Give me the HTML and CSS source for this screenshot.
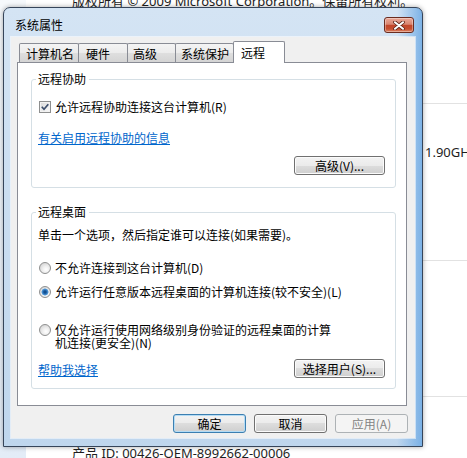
FILE: index.html
```html
<!DOCTYPE html>
<html lang="zh-CN">
<head>
    <meta charset="UTF-8">
    <meta name="viewport" content="width=device-width, initial-scale=1.0">
    <title>系统属性</title>
    <link rel="stylesheet" href="styles.css">
</head>
<body>
    <div class="page">
        <div class="sidebar"></div>
        <div class="content">
            <p class="copyright">版权所有 © 2009 Microsoft Corporation。保留所有权利。</p>
            <div class="section section-edition"></div>
            <div class="section section-system">
                <p class="spec-value">1.90GHz</p>
            </div>
            <div class="section section-name"></div>
            <p class="product-id">产品 ID: 00426-OEM-8992662-00006</p>
        </div>
    </div>

    <div class="dialog">
        <div class="titlebar">
            <span class="title">系统属性</span>
            <button class="close-button">
                <svg width="12" height="9" viewBox="0 0 12 9">
                    <path d="M2 1.2 L10 7.8 M10 1.2 L2 7.8" stroke="#5a2418" stroke-width="3.6" stroke-linecap="round"/>
                    <path d="M2 1.2 L10 7.8 M10 1.2 L2 7.8" stroke="#ffffff" stroke-width="2" stroke-linecap="round"/>
                </svg>
            </button>
        </div>

        <div class="client">
            <div class="tabs">
                <div class="tab tab-name">计算机名</div>
                <div class="tab tab-hardware">硬件</div>
                <div class="tab tab-advanced">高级</div>
                <div class="tab tab-protect">系统保护</div>
                <div class="tab tab-remote active">远程</div>
            </div>

            <div class="tab-panel">
                <div class="group group-assist">
                    <span class="group-title">远程协助</span>
                    <label class="check-row">
                        <span class="checkbox">
                            <svg width="10" height="10" viewBox="0 0 10 10">
                                <path d="M1.8 4.8 L4 7.2 L8.3 2.2" fill="none" stroke="#3b4d6b" stroke-width="1.7"/>
                            </svg>
                        </span>
                        允许远程协助连接这台计算机(R)
                    </label>
                    <a class="link link-info">有关启用远程协助的信息</a>
                    <div class="group-actions">
                        <button class="btn btn-wide">高级(V)...</button>
                    </div>
                </div>

                <div class="group group-desktop">
                    <span class="group-title">远程桌面</span>
                    <p class="hint">单击一个选项，然后指定谁可以连接(如果需要)。</p>
                    <label class="radio-row radio-first">
                        <span class="radio"></span>
                        <span>不允许连接到这台计算机(D)</span>
                    </label>
                    <label class="radio-row radio-second">
                        <span class="radio checked"></span>
                        <span>允许运行任意版本远程桌面的计算机连接(较不安全)(L)</span>
                    </label>
                    <label class="radio-row radio-third">
                        <span class="radio"></span>
                        <span class="radio-text-wrap">仅允许运行使用网络级别身份验证的远程桌面的计算机连接(更安全)(N)</span>
                    </label>
                    <div class="group-footer">
                        <a class="link">帮助我选择</a>
                        <button class="btn btn-wide">选择用户(S)...</button>
                    </div>
                </div>
            </div>

            <div class="dialog-buttons">
                <button class="btn btn-default">确定</button>
                <button class="btn">取消</button>
                <button class="btn" disabled>应用(A)</button>
            </div>
        </div>
    </div>
</body>
</html>
```

FILE: styles.css
```css
* {
    box-sizing: border-box;
}
html, body {
    margin: 0;
    height: 100%;
    overflow: hidden;
}
body {
    background-color: white;
    color: #1e1e1e;
    font-family: "Noto Sans", "Noto Sans CJK SC", sans-serif;
    position: relative;
}

/* control panel page behind the dialog */
.page {
    display: flex;
    height: 458px;
}
.sidebar {
    width: 26px;
    flex-shrink: 0;
    background: linear-gradient(#f6f9fc, #e3ecf7);
}
.content {
    flex: 1;
    min-width: 0;
    display: flex;
    flex-direction: column;
    padding-left: 46px;
}
.copyright {
    margin: -7px 0 0;
    font-size: 13px;
    line-height: 16px;
    white-space: nowrap;
}
.section {
    border-bottom: 1px solid #e2e2e2;
    flex-shrink: 0;
}
.section-edition {
    height: 95px;
}
.section-system {
    height: 157px;
    padding-top: 39px;
}
.section-name {
    height: 136px;
}
.spec-value {
    margin: 0;
    padding-left: 353px;
    font-size: 13px;
    line-height: 18px;
    white-space: nowrap;
}
.product-id {
    margin: 47px 0 0;
    font-size: 13px;
    line-height: 18px;
    white-space: nowrap;
}

/* dialog window */
.dialog {
    position: absolute;
    left: 3px;
    top: 7px;
    width: 420px;
    height: 440px;
    border: 1px solid #36455a;
    border-radius: 7px 7px 0 0;
    background:
        linear-gradient(to right, rgba(140, 190, 235, 0) 94%, rgba(110, 170, 228, 0.85) 100%),
        linear-gradient(#d4e4f4, #bfd6ed);
    box-shadow: 0 0 5px rgba(0, 0, 0, 0.35);
    display: flex;
    flex-direction: column;
    font-family: "Noto Sans CJK SC", sans-serif;
    font-size: 12px;
    color: black;
}
.titlebar {
    height: 29px;
    flex-shrink: 0;
    display: flex;
    justify-content: space-between;
    align-items: flex-start;
    padding: 9px 8px 0 11px;
}
.title {
    line-height: 16px;
}
.close-button {
    width: 30px;
    height: 16px;
    padding: 0;
    border: 1px solid #6a2c20;
    border-radius: 3px;
    background: linear-gradient(#eaa898 0%, #d98570 45%, #c2462b 52%, #c54e2f 78%, #df8a6b 100%);
    box-shadow: inset 0 0 0 1px rgba(255, 255, 255, 0.35);
    display: flex;
    align-items: center;
    justify-content: center;
}
.client {
    flex: 1;
    margin: 0 7px 8px;
    background-color: #f0f0f0;
    box-shadow: 0 0 0 1px rgba(255, 255, 255, 0.55);
    display: flex;
    flex-direction: column;
    padding: 4px 0 0 6px;
}

/* tabs */
.tabs {
    display: flex;
    align-items: flex-end;
    height: 22px;
    padding-left: 2px;
}
.tab {
    height: 20px;
    border: 1px solid #898c95;
    border-bottom: none;
    border-radius: 2px 2px 0 0;
    margin-right: -1px;
    padding-left: 6px;
    display: flex;
    align-items: center;
    line-height: 16px;
    background: linear-gradient(#f4f4f4 0%, #ebebeb 50%, #dedede 50%, #d3d3d3 100%);
}
.tab-name {
    width: 60px;
}
.tab-hardware {
    width: 50px;
    padding-left: 7px;
}
.tab-advanced {
    width: 49px;
    padding-left: 5px;
}
.tab-protect {
    width: 59px;
    padding-left: 5px;
}
.tab-remote {
    width: 52px;
    padding-left: 7px;
}
.tab.active {
    height: 22px;
    background: white;
    position: relative;
    z-index: 1;
}
.tab-panel {
    margin-top: -1px;
    width: 390px;
    height: 344px;
    background-color: white;
    border: 1px solid #898c95;
    padding: 0 10px 0 13px;
}

/* group boxes */
.group {
    border: 1px solid #d5dfe5;
    border-radius: 3px;
    padding: 0 10px 0 6px;
    display: flex;
    flex-direction: column;
    align-items: flex-start;
}
.group-assist {
    margin-top: 16px;
    padding-bottom: 12px;
}
.group-desktop {
    margin-top: 24px;
    padding-bottom: 10px;
}
.group-title {
    margin: -8px 0 0 -2px;
    padding: 0 3px 0 2px;
    background-color: white;
    line-height: 14px;
}
.check-row {
    margin-top: 13px;
    display: flex;
    align-items: center;
    line-height: 16px;
}
.checkbox {
    width: 12px;
    height: 12px;
    margin: 0 4px 0 1px;
    border: 1px solid #8e8f8f;
    background: linear-gradient(135deg, #d8d8d8, #fbfbfb);
    box-shadow: inset 0 0 0 1px #f2f2f2;
    display: flex;
}
.link {
    color: #0066cc;
    text-decoration: underline;
    line-height: 16px;
    cursor: pointer;
}
.link-info {
    margin-top: 15px;
}
.group-actions {
    align-self: stretch;
    margin-top: 10px;
    display: flex;
    justify-content: flex-end;
}
.hint {
    margin: 8px 0 0;
    line-height: 16px;
}
.radio-row {
    display: flex;
    align-items: center;
    line-height: 16px;
}
.radio-first {
    margin-top: 17px;
}
.radio-second {
    margin-top: 8px;
}
.radio-third {
    margin-top: 23px;
    align-items: flex-start;
    line-height: 13px;
}
.radio-third .radio {
    margin-top: 1px;
}
.radio-text-wrap {
    width: 280px;
}
.radio {
    width: 12px;
    height: 12px;
    flex-shrink: 0;
    margin: 0 4px 0 1px;
    border-radius: 50%;
    border: 1px solid #8e8f8f;
    background: radial-gradient(circle at 60% 65%, #ffffff 0, #f0f0f0 35%, #c9c9c9 100%);
}
.radio.checked {
    background:
        radial-gradient(circle at 50% 50%, #0d3f78 0, #1f62a8 1.6px, #58a0df 3.2px, rgba(88, 160, 223, 0) 3.8px),
        radial-gradient(circle at 60% 65%, #ffffff 0, #f0f0f0 35%, #c9c9c9 100%);
}
.group-footer {
    align-self: stretch;
    margin-top: 10px;
    display: flex;
    justify-content: space-between;
    align-items: flex-end;
}

/* buttons */
.btn {
    width: 73px;
    height: 19px;
    padding: 0;
    font: inherit;
    line-height: 16px;
    color: black;
    border: 1px solid #707070;
    border-radius: 3px;
    background: linear-gradient(#f3f3f3 0%, #ebebeb 50%, #dddddd 50%, #cfcfcf 100%);
    box-shadow: inset 0 0 0 1px #fbfbfb;
    cursor: pointer;
}
.btn-wide {
    width: 91px;
}
.btn-default {
    border-color: #3c7fb1;
    box-shadow: inset 0 0 0 1px #b4dcf5;
}
.btn:disabled {
    border-color: #adb2b5;
    background: #f4f4f4;
    color: #838383;
    box-shadow: none;
    cursor: default;
}
.dialog-buttons {
    margin-top: 8px;
    padding-right: 7px;
    display: flex;
    justify-content: flex-end;
    gap: 8px;
}
```
